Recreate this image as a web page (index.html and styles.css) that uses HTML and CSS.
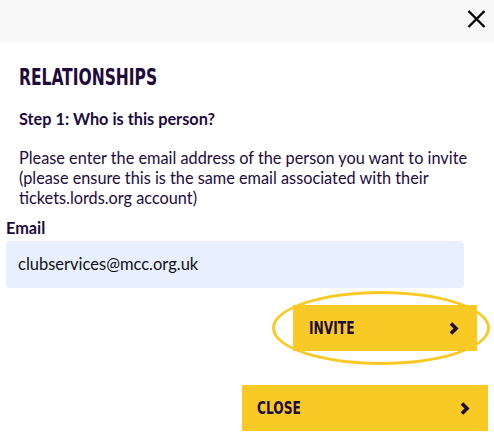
FILE: index.html
```html
<!DOCTYPE html>
<html>
<head>
<meta charset="utf-8">
<link rel="stylesheet" href="styles.css">
</head>
<body>
<header class="topbar">
  <svg class="close-x" width="19" height="18" viewBox="0 0 19 18"><path d="M1.5 1 L17.5 17 M17.5 1 L1.5 17" stroke="#000" stroke-width="2.4" fill="none"/></svg>
</header>
<main class="content">
  <h1 class="title"><span class="squeeze">RELATIONSHIPS</span></h1>
  <h2 class="step">Step 1: Who is this person?</h2>
  <p class="desc">Please enter the email address of the person you want to invite (please ensure this is the same email associated with their tickets.lords.org account)</p>
  <label class="label">Email</label>
  <div class="input">clubservices@mcc.org.uk</div>
  <div class="invite-row">
    <div class="invite-wrap">
      <button class="btn invite"><span class="btn-text">INVITE</span><svg width="10" height="13" viewBox="0 0 10 13"><path d="M2 1.5 L7 6.5 L2 11.5" stroke="#1e0b3c" stroke-width="3.6" fill="none" stroke-linejoin="miter"/></svg></button>
      <div class="ring"></div>
    </div>
  </div>
  <div class="close-row">
    <button class="btn closebtn"><span class="btn-text">CLOSE</span><svg width="10" height="13" viewBox="0 0 10 13"><path d="M2 1.5 L7 6.5 L2 11.5" stroke="#1e0b3c" stroke-width="3.6" fill="none" stroke-linejoin="miter"/></svg></button>
  </div>
</main>
</body>
</html>
```
FILE: styles.css
```css
html, body { margin: 0; padding: 0; background: #fff; }
body { font-family: Lato, "Noto Sans", sans-serif; color: #1e0b3c; width: 494px; height: 441px; overflow: hidden; }
.topbar { height: 42px; background: #f8f8f8; display: flex; justify-content: flex-end; align-items: flex-start; }
.close-x { margin: 10px 8px 0 0; display: block; }
.content { display: flex; flex-direction: column; }
.title { margin: 24px 0 0 19px; font-family: "DejaVu Sans Condensed", "DejaVu Sans", sans-serif; font-stretch: condensed; font-weight: 700; font-size: 23px; line-height: 22px; color: #1e0b3c; }
.squeeze { display: inline-block; transform: scaleX(0.75); transform-origin: left center; }
.step { margin: 21px 0 0 19px; font-size: 16.3px; line-height: 20px; font-weight: 700; color: #1e0b3c; }
.desc { margin: 19px 0 0 19px; font-size: 16.3px; line-height: 20px; color: #1e0b3c; width: 470px; }
.label { margin: 10px 0 0 6px; font-size: 16.3px; line-height: 20px; font-weight: 700; color: #1e0b3c; }
.input { margin: 3px 0 0 6px; width: 458px; height: 47px; background: #e8f0fe; border-radius: 4px; box-sizing: border-box; padding: 0 12px 2px; display: flex; align-items: center; font-size: 16.5px; color: #111; }
.invite-row { display: flex; justify-content: flex-end; margin-top: 17px; padding-right: 17px; }
.invite-wrap { position: relative; }
.btn { border: 0; background: #f9c925; display: flex; align-items: center; justify-content: space-between; box-sizing: border-box; font-family: "DejaVu Sans Condensed", "DejaVu Sans", sans-serif; font-stretch: condensed; font-weight: 700; font-size: 17px; color: #1e0b3c; }
.btn-text { display: inline-block; transform: scaleX(0.8); transform-origin: left center; }
.invite { width: 184px; height: 46px; padding: 0 18px 0 16px; }
.ring { position: absolute; left: -21px; top: -14px; width: 218px; height: 74px; border: 3px solid #f9c925; border-radius: 50%; box-sizing: border-box; pointer-events: none; }
.close-row { display: flex; justify-content: flex-end; margin-top: 34px; padding-right: 6px; }
.closebtn { width: 246px; height: 46px; padding: 0 18px 0 15px; }
```
